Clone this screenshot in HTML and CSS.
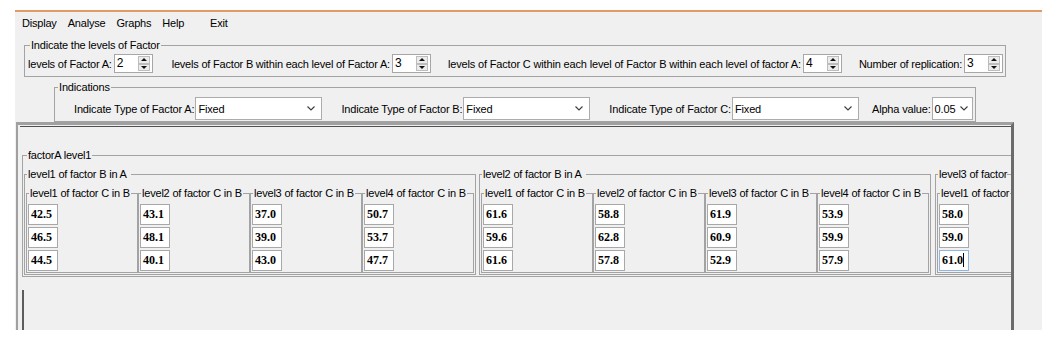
FILE: index.html
```html
<!DOCTYPE html>
<html>
<head>
<meta charset="utf-8">
<title>Three factor nested design</title>
<link rel="stylesheet" href="styles.css">
</head>
<body>
<div class="window">
  <div class="menubar">
    <span class="menu">Display</span>
    <span class="menu">Analyse</span>
    <span class="menu">Graphs</span>
    <span class="menu">Help</span>
    <span class="menu exit">Exit</span>
  </div>

  <fieldset class="group levels">
    <legend>Indicate the levels of Factor</legend>
    <div class="row">
      <div class="field g1"><span>levels of Factor A:</span>
        <span class="spinner"><span class="spin-value">2</span><span class="spin-btns"><span class="spin-btn up"></span><span class="spin-btn down"></span></span></span>
      </div>
      <div class="field g2"><span>levels of Factor B within each level of Factor A:</span>
        <span class="spinner"><span class="spin-value">3</span><span class="spin-btns"><span class="spin-btn up"></span><span class="spin-btn down"></span></span></span>
      </div>
      <div class="field g3"><span>levels of Factor C within each level of Factor B within each level of factor A:</span>
        <span class="spinner"><span class="spin-value">4</span><span class="spin-btns"><span class="spin-btn up"></span><span class="spin-btn down"></span></span></span>
      </div>
      <div class="field g4"><span>Number of replication:</span>
        <span class="spinner"><span class="spin-value">3</span><span class="spin-btns"><span class="spin-btn up"></span><span class="spin-btn down"></span></span></span>
      </div>
    </div>
  </fieldset>

  <fieldset class="group indications">
    <legend>Indications</legend>
    <div class="row">
      <div class="field s1"><span>Indicate Type of Factor A:</span>
        <span class="select wide"><span class="val">Fixed</span><svg width="8" height="5" viewBox="0 0 8 5"><polyline points="0.5,0.5 4,4 7.5,0.5" fill="none" stroke="#3a3a3a" stroke-width="1.1"/></svg></span>
      </div>
      <div class="field s2"><span>Indicate Type of Factor B:</span>
        <span class="select wide"><span class="val">Fixed</span><svg width="8" height="5" viewBox="0 0 8 5"><polyline points="0.5,0.5 4,4 7.5,0.5" fill="none" stroke="#3a3a3a" stroke-width="1.1"/></svg></span>
      </div>
      <div class="field s3"><span>Indicate Type of Factor C:</span>
        <span class="select wide"><span class="val">Fixed</span><svg width="8" height="5" viewBox="0 0 8 5"><polyline points="0.5,0.5 4,4 7.5,0.5" fill="none" stroke="#3a3a3a" stroke-width="1.1"/></svg></span>
      </div>
      <div class="field s4"><span>Alpha value:</span>
        <span class="select narrow"><span class="val">0.05</span><svg width="8" height="5" viewBox="0 0 8 5"><polyline points="0.5,0.5 4,4 7.5,0.5" fill="none" stroke="#3a3a3a" stroke-width="1.1"/></svg></span>
      </div>
    </div>
  </fieldset>

  <div class="pane">
    <div class="pane-inner">
      <fieldset class="tb fa">
        <legend>factorA level1</legend>
        <div class="brow">
          <fieldset class="tb fb">
            <legend>level1 of factor B in A</legend>
            <div class="crow">
              <fieldset class="tb fc"><legend>level1 of factor C in B</legend>
                <div class="cells"><div class="cell">42.5</div><div class="cell">46.5</div><div class="cell">44.5</div></div>
              </fieldset>
              <fieldset class="tb fc"><legend>level2 of factor C in B</legend>
                <div class="cells"><div class="cell">43.1</div><div class="cell">48.1</div><div class="cell">40.1</div></div>
              </fieldset>
              <fieldset class="tb fc"><legend>level3 of factor C in B</legend>
                <div class="cells"><div class="cell">37.0</div><div class="cell">39.0</div><div class="cell">43.0</div></div>
              </fieldset>
              <fieldset class="tb fc"><legend>level4 of factor C in B</legend>
                <div class="cells"><div class="cell">50.7</div><div class="cell">53.7</div><div class="cell">47.7</div></div>
              </fieldset>
            </div>
          </fieldset>
          <fieldset class="tb fb">
            <legend>level2 of factor B in A</legend>
            <div class="crow">
              <fieldset class="tb fc"><legend>level1 of factor C in B</legend>
                <div class="cells"><div class="cell">61.6</div><div class="cell">59.6</div><div class="cell">61.6</div></div>
              </fieldset>
              <fieldset class="tb fc"><legend>level2 of factor C in B</legend>
                <div class="cells"><div class="cell">58.8</div><div class="cell">62.8</div><div class="cell">57.8</div></div>
              </fieldset>
              <fieldset class="tb fc"><legend>level3 of factor C in B</legend>
                <div class="cells"><div class="cell">61.9</div><div class="cell">60.9</div><div class="cell">52.9</div></div>
              </fieldset>
              <fieldset class="tb fc"><legend>level4 of factor C in B</legend>
                <div class="cells"><div class="cell">53.9</div><div class="cell">59.9</div><div class="cell">57.9</div></div>
              </fieldset>
            </div>
          </fieldset>
          <fieldset class="tb fb last">
            <legend>level3 of factor</legend>
            <div class="crow">
              <fieldset class="tb fc"><legend>level1 of factor</legend>
                <div class="cells"><div class="cell">58.0</div><div class="cell">59.0</div><div class="cell focused">61.0<span class="caret"></span></div></div>
              </fieldset>
            </div>
          </fieldset>
        </div>
      </fieldset>
      <div class="next"></div>
    </div>
  </div>
</div>
</body>
</html>
```
FILE: styles.css
```css
* { box-sizing: border-box; }

body {
  margin: 0;
  background: #ffffff;
  font-family: "Liberation Sans", Arial, sans-serif;
  font-size: 11px;
  letter-spacing: -0.2px;
  color: #000;
}

.window {
  margin: 10px 0 0 15px;
  width: 1027px;
  height: 320px;
  background: #f0f0f0;
  border-top: 2px solid #e39b66;
  display: flex;
  flex-direction: column;
  overflow: hidden;
}

.menubar {
  flex: none;
  height: 22px;
  display: flex;
  align-items: center;
  padding-left: 7px;
  gap: 11px;
}
.menu.exit { margin-left: 15px; }

fieldset {
  margin: 0;
  padding: 0;
  border: 1px solid #a3a3a3;
  min-width: 0;
}
legend {
  padding: 0 1px;
  line-height: 14px;
}

.row { display: flex; align-items: center; }
.field { display: flex; align-items: center; flex: none; }

/* levels group */
.levels {
  flex: none;
  margin: 4px 0 0 9px;
  width: 982px;
  padding: 2px 3px 3px 3px;
}
.levels legend { margin-left: 2px; }
.levels .field { gap: 2px; }
.g2 { margin-left: 19px; }
.g3 { margin-left: 17px; letter-spacing: -0.16px; }
.g4 { margin-left: 17px; }

.spinner {
  display: flex;
  width: 39px;
  height: 19px;
  border: 1px solid #a7a7a7;
  background: #fff;
}
.spin-value {
  width: 22px;
  padding-left: 2px;
  font-size: 12px;
  line-height: 17px;
}
.spin-btns {
  display: flex;
  flex-direction: column;
  width: 12px;
  margin: 1px 2px 1px auto;
}
.spin-btn {
  flex: 1;
  border: 1px solid #bdbdbd;
  background: #ececec;
  display: flex;
  align-items: center;
  justify-content: center;
}
.spin-btn::after {
  content: "";
  border-left: 3px solid transparent;
  border-right: 3px solid transparent;
}
.up::after { border-bottom: 3px solid #111; }
.down::after { border-top: 3px solid #111; }

/* indications group */
.indications {
  flex: none;
  margin: 3px 0 0 39px;
  width: 922px;
  padding: 3px 0 1px 3px;
  letter-spacing: -0.16px;
}
.indications .row { padding-left: 16px; }
.indications .field { gap: 1px; }
.s2, .s3 { margin-left: 19px; }
.s4 { margin-left: 13px; }

.select {
  display: flex;
  align-items: center;
  height: 23px;
  border: 1px solid #acacac;
  background: #fff;
  padding-left: 2px;
}
.select.wide { width: 127px; }
.select.narrow { width: 41px; }
.select .val { flex: 1; }
.select.wide svg { margin-right: 6px; }
.select.narrow svg { margin-right: 4px; }

/* scroll pane with data */
.pane {
  flex: 1;
  margin-left: 1px;
  width: 998px;
  border-top: 3px solid #a0a0a0;
  border-left: 2px solid #a0a0a0;
  border-right: 3px solid #6b6b6b;
  overflow: hidden;
}
.pane-inner {
  margin: 1px 0 0 2px;
  border-top: 1px solid #505050;
  padding: 21px 0 0 2px;
}

.fa {
  width: max-content;
  padding: 5px 1px 1px 1px;
}
.fa > legend { margin-left: 3px; }
.brow { display: flex; }
.fb {
  padding: 5px 1px 1px 1px;
  margin-right: 3px;
}
.fb > legend { margin-left: 1px; padding-right: 4px; }
.fb.last { margin-left: 1px; }
.fb.last > legend { padding-right: 0; }
.crow { display: flex; }
.fc {
  width: 112px;
  padding: 4px 1px 1px 1px;
}
.fc > legend { margin-left: 1px; }

.cells { display: flex; flex-direction: column; gap: 2px; }
.cell {
  width: 30px;
  height: 21px;
  border: 1px solid #a8a8a8;
  background: #fff;
  padding-left: 2px;
  font-family: "Liberation Serif", "Times New Roman", serif;
  font-weight: bold;
  font-size: 12px;
  letter-spacing: 0;
  line-height: 19px;
  white-space: nowrap;
}
.cell.focused { border-color: #8db7e2; }
.caret {
  display: inline-block;
  width: 1px;
  height: 14px;
  background: #000;
  vertical-align: -3px;
}

.next {
  margin-top: 13px;
  height: 60px;
  border-left: 2px solid #5c5c5c;
}
```
